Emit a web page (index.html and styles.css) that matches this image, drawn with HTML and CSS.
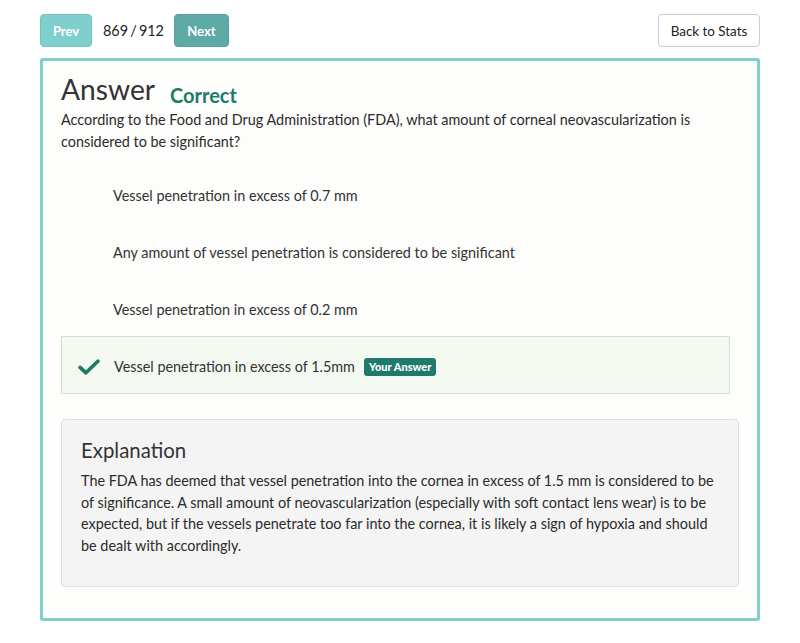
FILE: index.html
```html
<!DOCTYPE html>
<html>
<head>
<meta charset="utf-8">
<link rel="stylesheet" href="styles.css">
</head>
<body>
<div class="page">
  <div class="toolbar">
    <div class="nav">
      <button class="btn btn-prev">Prev</button>
      <span class="count">869 / 912</span>
      <button class="btn btn-next">Next</button>
    </div>
    <button class="btn-back">Back to Stats</button>
  </div>
  <div class="panel">
    <div class="title-row">
      <h1 class="title">Answer</h1>
      <span class="status">Correct</span>
    </div>
    <p class="question">According to the Food and Drug Administration (FDA), what amount of corneal neovascularization is considered to be significant?</p>
    <ul class="options">
      <li class="option">Vessel penetration in excess of 0.7 mm</li>
      <li class="option">Any amount of vessel penetration is considered to be significant</li>
      <li class="option">Vessel penetration in excess of 0.2 mm</li>
      <li class="option option-chosen">
        <svg class="check" viewBox="0 0 24 18" width="22" height="16"><path d="M2 9.5 L8.5 15.5 L22 2.5" fill="none" stroke="#1e7a6a" stroke-width="4.2" stroke-linecap="round" stroke-linejoin="round"/></svg>
        <span>Vessel penetration in excess of 1.5mm</span>
        <span class="badge">Your Answer</span>
      </li>
    </ul>
    <div class="explanation">
      <h2 class="exp-title">Explanation</h2>
      <p class="exp-text">The FDA has deemed that vessel penetration into the cornea in excess of 1.5 mm is considered to be of significance. A small amount of neovascularization (especially with soft contact lens wear) is to be expected, but if the vessels penetrate too far into the cornea, it is likely a sign of hypoxia and should be dealt with accordingly.</p>
    </div>
  </div>
</div>
</body>
</html>
```
FILE: styles.css
```css
* { box-sizing: border-box; }
html, body { margin: 0; padding: 0; background: #ffffff; }
body {
  font-family: Lato, "Open Sans", sans-serif;
  color: #2b2b2b;
  font-size: 14.4px;
}
.page { padding: 14px 40px 0 40px; }
.toolbar {
  display: flex;
  justify-content: space-between;
  align-items: center;
  height: 33px;
}
.nav { display: flex; align-items: center; gap: 0; }
.btn {
  font-family: Lato, sans-serif;
  font-weight: 700;
  font-size: 13px;
  color: #fff;
  border: 1px solid transparent;
  border-radius: 4px;
  height: 33px;
  padding: 0;
  cursor: pointer;
}
.btn-prev { background: #7fcfcc; border-color: #74c4c1; width: 52px; }
.btn-next { background: #5eaaa7; border-color: #559f9c; width: 55px; }
.count { margin: 0 10px 0 11px; font-size: 14.4px; color: #222; word-spacing: -1.5px; }
.btn-back {
  font-family: Lato, sans-serif;
  font-size: 13.4px;
  color: #222;
  background: #fff;
  border: 1px solid #ccc;
  border-radius: 4px;
  height: 33px;
  width: 102px;
  padding: 0;
}
.panel {
  margin-top: 11px;
  border: 3px solid #7fcfcc;
  border-radius: 3px;
  background: #fdfdfb;
  padding: 10px 18px 31px 18px;
}
.title-row { display: flex; align-items: baseline; gap: 15px; }
.title {
  margin: 0;
  font-weight: 400;
  font-size: 28.2px;
  line-height: 36px;
  color: #333;
}
.status {
  font-weight: 700;
  font-size: 20px;
  color: #1e7a6a;
  position: relative;
  top: 3px;
}
.question { margin: 2px 0 0 0; line-height: 22px; }
.options { list-style: none; margin: 0; padding: 0; }
.option {
  height: 57px;
  padding-left: 52px;
  display: flex;
  align-items: center;
  color: #333;
}
.options .option:first-child { margin-top: 14px; }
.option-chosen {
  height: 58px;
  margin-top: -2px;
  padding-top: 3px;
  background: #f3f9f1;
  border: 1px solid #cde4c6;
  margin-right: 9px;
  padding-left: 16px;
}
.check { margin-right: 14px; flex: none; }
.badge {
  margin-left: 9px;
  background: #1e7a6a;
  color: #fff;
  font-weight: 900;
  font-size: 11px;
  border-radius: 3px;
  padding: 2px 5px;
  line-height: 14px;
}
.explanation {
  margin-top: 25px;
  background: #f4f4f4;
  border: 1px solid #e0e0e0;
  border-radius: 4px;
  padding: 16px 19px 27px 19px;
  min-height: 168px;
}
.exp-title {
  margin: 0 0 6px 0;
  font-weight: 400;
  font-size: 20.4px;
  line-height: 28px;
  color: #333;
}
.exp-text { margin: 0; line-height: 21.6px; color: #2b2b2b; }
```
